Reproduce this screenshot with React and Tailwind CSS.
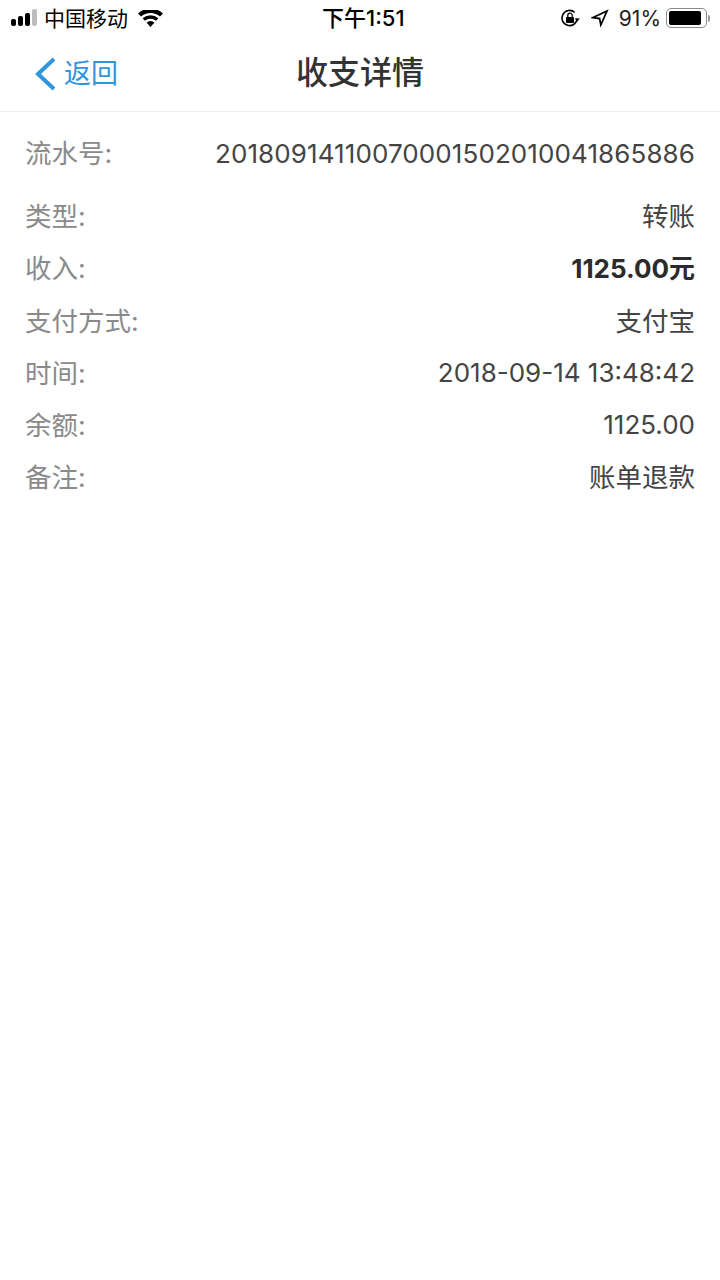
const FONT = "font-['Inter','Noto_Sans_CJK_SC',sans-serif]";

const rows = [
  { label: '类型:', value: '转账', cjk: true },
  { label: '收入:', value: '1125.00元', bold: true },
  { label: '支付方式:', value: '支付宝', cjk: true },
  { label: '时间:', value: '2018-09-14 13:48:42' },
  { label: '余额:', value: '1125.00' },
  { label: '备注:', value: '账单退款', cjk: true },
];

const SignalBars = () => (
  <svg width="28" height="18" viewBox="0 0 28 18">
    <rect x="0" y="10" width="5" height="7" rx="2" fill="#000" />
    <rect x="7" y="7" width="5" height="10" rx="2" fill="#000" />
    <rect x="14" y="4" width="5" height="13" rx="2" fill="#000" />
    <rect x="21" y="0" width="5" height="17" rx="2" fill="#bdbdbd" />
  </svg>
);

const Wifi = () => (
  <svg width="25" height="17" viewBox="0 0 25 17">
    <path d="M12.5 17l-4-4.4a6 6 0 0 1 8 0z" fill="#000" />
    <path d="M6.9 10.8L4.6 8.3a12 12 0 0 1 15.8 0l-2.3 2.5a8.6 8.6 0 0 0-11.2 0z" fill="#000" />
    <path d="M3 6.6L0 3.4a18.4 18.4 0 0 1 25 0l-3 3.2a14.2 14.2 0 0 0-19 0z" fill="#000" />
  </svg>
);

const RotationLock = () => (
  <svg width="20" height="20" viewBox="0 0 20 20" fill="none">
    <path d="M17.2 10.5a7.6 7.6 0 1 1-2.6-6.2" stroke="#000" strokeWidth="1.6" />
    <path d="M14.6 10.4l2.7 3 2.6-3z" fill="#000" />
    <rect x="6" y="9" width="8" height="6" rx="1" fill="#000" />
    <path d="M7.8 9V7.4a2.2 2.2 0 0 1 4.4 0V9" stroke="#000" strokeWidth="1.3" />
  </svg>
);

const LocationArrow = () => (
  <svg width="18" height="18" viewBox="0 0 18 18" fill="none">
    <path d="M16 2L2 8.6l6.6 1 1.2 6.4z" stroke="#000" strokeWidth="1.7" strokeLinejoin="miter" />
  </svg>
);

const BackChevron = () => (
  <svg width="24" height="34" viewBox="0 0 24 34" fill="none">
    <path d="M21 2L5 17l16 15" stroke="#2f95dc" strokeWidth="4" />
  </svg>
);

const Battery = () => (
  <div className="flex items-center">
    <div className="w-[41px] h-[20px] rounded-[5px] border border-[#8a8a8a] p-[2px]">
      <div className="h-full w-[92%] rounded-[2px] bg-black" />
    </div>
    <div className="ml-[1px] h-[7px] w-[2px] rounded-r-sm bg-[#9a9a9a]" />
  </div>
);

const StatusBar = () => (
  <div className="relative flex h-[36px] items-center justify-between pl-[11px] pr-[10px] text-black">
    <div className="flex items-center">
      <SignalBars />
      <span className="ml-[5px] text-[21px] leading-none">中国移动</span>
      <span className="ml-[10px]"><Wifi /></span>
    </div>
    <span className="absolute left-[322px] top-[6px] text-[22px] leading-[24px] font-medium">下午1:51</span>
    <div className="flex items-center">
      <RotationLock />
      <span className="ml-[11px]"><LocationArrow /></span>
      <span className="ml-[10px] text-[21px] leading-none text-[#222]">91%</span>
      <span className="ml-[5px]"><Battery /></span>
    </div>
  </div>
);

const NavBar = () => (
  <div className="relative flex h-[76px] items-center border-b border-[#efefef]">
    <div className="flex items-center pl-[33px] text-[#2f95dc]">
      <BackChevron />
      <span className="ml-[7px] text-[27px] leading-none">返回</span>
    </div>
    <h1 className="absolute inset-x-0 top-[17px] text-center text-[32px] leading-[40px] font-medium text-[#333]">
      收支详情
    </h1>
  </div>
);

const Row = ({ label, value, bold, cjk }) => {
  let valueClass = 'text-[26px] text-[#444]';
  if (bold) valueClass = 'text-[26px] font-bold text-[#2b2b2b]';
  if (cjk) valueClass = 'pt-[2px] text-[26.5px] text-[#444]';
  return (
    <div className="flex h-[52.2px] items-center justify-between">
      <span className="pt-[2px] text-[26.5px] text-[#8a8a8a]">{label}</span>
      <span className={valueClass}>{value}</span>
    </div>
  );
};

export default function App() {
  return (
    <div className={`${FONT} min-h-[1280px] w-[720px] bg-white`}>
      <StatusBar />
      <NavBar />
      <div className="px-[25px] pt-[15px]">
        <div className="mb-[11px] flex h-[52px] items-center justify-between">
          <span className="pt-[2px] text-[26.5px] text-[#8a8a8a]">流水号:</span>
          <span className="text-[26px] tracking-[0.1px] text-[#444]">20180914110070001502010041865886</span>
        </div>
        {rows.map((row) => (
          <Row key={row.label} {...row} />
        ))}
      </div>
    </div>
  );
}
